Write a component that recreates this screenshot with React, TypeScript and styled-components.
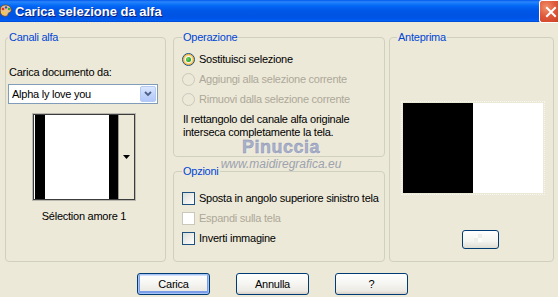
import styled, { createGlobalStyle } from "styled-components";

const GlobalStyle = createGlobalStyle`
  html, body {
    margin: 0;
    padding: 0;
    background: #ece9d8;
  }
`;

const Window = styled.div`
  position: relative;
  width: 558px;
  height: 297px;
  overflow: hidden;
  display: flex;
  flex-direction: column;
  background: #ece9d8;
  font-family: "Liberation Sans", Arial, sans-serif;
  font-size: 11px;
  letter-spacing: -0.25px;
  color: #000;
  white-space: nowrap;
`;

const TitleBar = styled.div`
  height: 22px;
  flex-shrink: 0;
  display: flex;
  align-items: center;
  background: linear-gradient(
    to bottom,
    #0058ee 0%,
    #2a83f8 8%,
    #167cfb 15%,
    #0366f4 28%,
    #0058e8 45%,
    #0054e3 70%,
    #0056ea 85%,
    #005ff3 93%,
    #0048cf 100%
  );
`;

const TitleIcon = styled.svg`
  width: 12px;
  height: 14px;
  margin: 0 3px 0 0;
  flex-shrink: 0;
`;

const TitleText = styled.span`
  flex: 1;
  color: #fff;
  font-weight: bold;
  font-size: 13px;
  letter-spacing: 0;
  text-shadow: 1px 1px 0 #0a1e7a;
`;

const CloseButton = styled.div`
  width: 21px;
  height: 21px;
  margin-right: -3px;
  align-self: flex-start;
  border: 1px solid #fff;
  border-right: none;
  border-radius: 3px 0 0 3px;
  background: radial-gradient(circle at 30% 30%, #f0906a 0%, #e0583a 45%, #c63d1e 100%);
  display: flex;
  align-items: center;
  justify-content: center;
`;

const Body = styled.div`
  flex: 1;
  display: flex;
  flex-direction: column;
  padding: 9px 4px 0 5px;
`;

const Columns = styled.div`
  display: flex;
  height: 231px;
`;

const Group = styled.fieldset<{ $width?: number; $height?: number }>`
  margin: 0;
  padding: 0;
  min-width: 0;
  border: 1px solid #d0d0bf;
  border-radius: 4px;
  box-sizing: border-box;
  flex: ${(p) => (p.$width || p.$height ? "none" : "1")};
  ${(p) => (p.$width ? `width: ${p.$width}px;` : "")}
  ${(p) => (p.$height ? `height: ${p.$height}px;` : "")}
`;

const Legend = styled.legend<{ $offset: number }>`
  margin-left: ${(p) => p.$offset}px;
  padding: 0 1px;
  color: #0046d5;
  font-size: 11px;
  line-height: 13px;
`;

const MiddleColumn = styled.div`
  width: 212px;
  flex: none;
  margin: 0 4px 0 7px;
  display: flex;
  flex-direction: column;
  gap: 8px;
`;

/* left: Canali alfa */
const LeftContent = styled.div`
  padding: 22px 0 0 2px;
  display: flex;
  flex-direction: column;
`;

const Label = styled.div`
  line-height: 13px;
  padding-left: 1px;
`;

const Combo = styled.div`
  margin-top: 5px;
  width: 150px;
  height: 20px;
  box-sizing: border-box;
  border: 1px solid #7f9db9;
  background: #fff;
  display: flex;
  align-items: center;
`;

const ComboText = styled.span`
  flex: 1;
  padding-left: 3px;
`;

const ComboArrow = styled.div`
  width: 16px;
  height: 16px;
  margin-right: 1px;
  border: 1px solid #b5c9f5;
  border-radius: 2px;
  box-sizing: border-box;
  background: linear-gradient(to bottom, #dce7fd 0%, #c3d5fb 50%, #b2c8f8 100%);
  display: flex;
  align-items: center;
  justify-content: center;
`;

const Thumb = styled.div`
  margin: 10px 0 0 25px;
  width: 102px;
  height: 86px;
  box-sizing: border-box;
  border: 1px solid #3c3c3c;
  outline: 1px solid #b8b8b0;
  display: flex;
`;

const ThumbImage = styled.div`
  width: 83px;
  display: flex;
  background: #fff;
  border-left: 1px solid #fff;
`;

const Bar = styled.div<{ $w: number }>`
  width: ${(p) => p.$w}px;
  background: #000;
`;

const ThumbFill = styled.div`
  flex: 1;
  background: #fff;
`;

const ThumbScroll = styled.div`
  flex: 1;
  background: #ece9d8;
  border-left: 1px solid #9a9a90;
  display: flex;
  align-items: center;
  justify-content: center;
`;

const Caption = styled.div`
  margin: 10px 0 0 25px;
  width: 102px;
  text-align: center;
  line-height: 13px;
`;

/* middle: Operazione / Opzioni */
const OptionsContent = styled.div<{ $top: number }>`
  padding: ${(p) => p.$top}px 0 0 8px;
  display: flex;
  flex-direction: column;
`;

const Row = styled.div<{ $disabled?: boolean }>`
  height: 20px;
  display: flex;
  align-items: center;
  gap: 4px;
  color: ${(p) => (p.$disabled ? "#aca899" : "#000")};
`;

const Radio = styled.span<{ $checked?: boolean; $disabled?: boolean }>`
  width: 13px;
  height: 13px;
  box-sizing: border-box;
  border-radius: 50%;
  border: 1px solid ${(p) => (p.$disabled ? "#cac8bb" : "#1c5180")};
  background: ${(p) =>
    p.$disabled
      ? "#ece9d8"
      : "radial-gradient(circle at 40% 40%, #fff 0%, #f2f1ec 50%, #d6d4ca 100%)"};
  box-shadow: ${(p) => (p.$checked ? "inset 0 0 0 1px #f8b636, inset 0 0 0 2px #fdd889" : "none")};
  display: flex;
  align-items: center;
  justify-content: center;
  flex-shrink: 0;

  &::after {
    content: "";
    display: ${(p) => (p.$checked ? "block" : "none")};
    width: 5px;
    height: 5px;
    border-radius: 50%;
    background: radial-gradient(circle at 35% 35%, #6fd46f 0%, #21a121 70%);
  }
`;

const Check = styled.span<{ $disabled?: boolean }>`
  width: 13px;
  height: 13px;
  box-sizing: border-box;
  border: 1px solid ${(p) => (p.$disabled ? "#cac8bb" : "#1c5180")};
  background: ${(p) =>
    p.$disabled ? "#fff" : "linear-gradient(135deg, #dcdcd7 0%, #f4f4f2 70%, #fff 100%)"};
  flex-shrink: 0;
`;

const Description = styled.div`
  margin-top: 4px;
  line-height: 13px;
  padding-left: 1px;
`;

/* right: Anteprima */
const PreviewContent = styled.div`
  padding: 59px 0 0 13px;
  display: flex;
  flex-direction: column;
`;

const Preview = styled.div`
  width: 140px;
  height: 90px;
  display: flex;
  outline: 1px dotted #f6f5ee;
  outline-offset: 1px;
`;

const PreviewHalf = styled.div<{ $color: string }>`
  flex: 1;
  background: ${(p) => p.$color};
`;

const ZoomButton = styled.div`
  margin: 37px 0 0 59px;
  width: 37px;
  height: 19px;
  box-sizing: border-box;
  border: 1px solid #003c74;
  border-radius: 3px;
  background:
    repeating-conic-gradient(#eeeeea 0% 25%, #fbfbf9 0% 50%) 11px 3px / 8px 8px no-repeat,
    linear-gradient(to bottom, #fff 0%, #f4f4f0 60%, #dedcd3 100%);
`;

/* bottom buttons */
const ButtonRow = styled.div`
  display: flex;
  gap: 26px;
  margin: 11px 0 0 132px;
`;

const Button = styled.div<{ $default?: boolean }>`
  width: 73px;
  height: 22px;
  box-sizing: border-box;
  border: 1px solid #003c74;
  border-radius: 3px;
  background: linear-gradient(to bottom, #ffffff 0%, #f6f6f3 45%, #eceae3 85%, #d6d0c5 100%);
  box-shadow: ${(p) =>
    p.$default ? "inset 0 0 0 1px #a8c4f4, inset 0 -1px 0 2px #7c9ee8, inset 0 0 0 2px #cfe0fc" : "none"};
  display: flex;
  align-items: center;
  justify-content: center;
`;

/* watermark over the dialog */
const Watermark = styled.div`
  position: absolute;
  left: 220px;
  top: 138px;
  width: 122px;
  display: flex;
  flex-direction: column;
  align-items: center;
  pointer-events: none;
`;

const MarkName = styled.span`
  font-size: 18px;
  font-weight: bold;
  line-height: 18px;
  letter-spacing: 0.5px;
  color: #a9b0c9;
  -webkit-text-stroke: 0.4px #8890b0;
  text-shadow: 1px 1px 0 #f4f2ea;
`;

const MarkUrl = styled.span`
  font-size: 12px;
  font-style: italic;
  line-height: 12px;
  letter-spacing: 0;
  color: #9da2ae;
  margin-top: 2px;
`;

function App() {
  return (
    <>
      <GlobalStyle />
      <Window>
        <TitleBar>
          <TitleIcon viewBox="0 0 12 14">
            <path d="M1 3 C3 0 10 0 11 5 C12 9 8 8 8 10 C8 13 3 13 1 10 C0 8 0 5 1 3Z" fill="#e8c28a" stroke="#7a4a18" strokeWidth="0.8" />
            <circle cx="3" cy="5" r="1.3" fill="#e03020" />
            <circle cx="6" cy="3.4" r="1.2" fill="#2050e0" />
            <circle cx="9" cy="5" r="1.2" fill="#30b030" />
            <circle cx="3.6" cy="9" r="1.2" fill="#f0d020" />
          </TitleIcon>
          <TitleText>Carica selezione da alfa</TitleText>
          <CloseButton>
            <svg width="12" height="12" viewBox="0 0 12 12">
              <path d="M2 2 L10 10 M10 2 L2 10" stroke="#fff" strokeWidth="2" strokeLinecap="square" />
            </svg>
          </CloseButton>
        </TitleBar>
        <Body>
          <Columns>
            <Group $width={161}>
              <Legend $offset={2}>Canali alfa</Legend>
              <LeftContent>
                <Label>Carica documento da:</Label>
                <Combo>
                  <ComboText>Alpha ly love you</ComboText>
                  <ComboArrow>
                    <svg width="8" height="6" viewBox="0 0 8 6">
                      <path d="M1 1 L4 4 L7 1" fill="none" stroke="#4d6185" strokeWidth="1.8" />
                    </svg>
                  </ComboArrow>
                </Combo>
                <Thumb>
                  <ThumbImage>
                    <Bar $w={10} />
                    <ThumbFill />
                    <Bar $w={9} />
                  </ThumbImage>
                  <ThumbScroll>
                    <svg width="7" height="4" viewBox="0 0 7 4">
                      <path d="M0 0 H7 L3.5 4Z" fill="#000" />
                    </svg>
                  </ThumbScroll>
                </Thumb>
                <Caption>Sélection amore 1</Caption>
              </LeftContent>
            </Group>
            <MiddleColumn>
              <Group $height={126}>
                <Legend $offset={8}>Operazione</Legend>
                <OptionsContent $top={5}>
                  <Row>
                    <Radio $checked />
                    Sostituisci selezione
                  </Row>
                  <Row $disabled>
                    <Radio $disabled />
                    Aggiungi alla selezione corrente
                  </Row>
                  <Row $disabled>
                    <Radio $disabled />
                    Rimuovi dalla selezione corrente
                  </Row>
                  <Description>
                    Il rettangolo del canale alfa originale
                    <br />
                    interseca completamente la tela.
                  </Description>
                </OptionsContent>
              </Group>
              <Group>
                <Legend $offset={8}>Opzioni</Legend>
                <OptionsContent $top={10}>
                  <Row>
                    <Check />
                    Sposta in angolo superiore sinistro tela
                  </Row>
                  <Row $disabled>
                    <Check $disabled />
                    Espandi sulla tela
                  </Row>
                  <Row>
                    <Check />
                    Inverti immagine
                  </Row>
                </OptionsContent>
              </Group>
            </MiddleColumn>
            <Group $width={165}>
              <Legend $offset={7}>Anteprima</Legend>
              <PreviewContent>
                <Preview>
                  <PreviewHalf $color="#000" />
                  <PreviewHalf $color="#fff" />
                </Preview>
                <ZoomButton />
              </PreviewContent>
            </Group>
          </Columns>
          <ButtonRow>
            <Button $default>Carica</Button>
            <Button>Annulla</Button>
            <Button>?</Button>
          </ButtonRow>
        </Body>
        <Watermark>
          <MarkName>Pinuccia</MarkName>
          <MarkUrl>www.maidiregrafica.eu</MarkUrl>
        </Watermark>
      </Window>
    </>
  );
}

export default App;
